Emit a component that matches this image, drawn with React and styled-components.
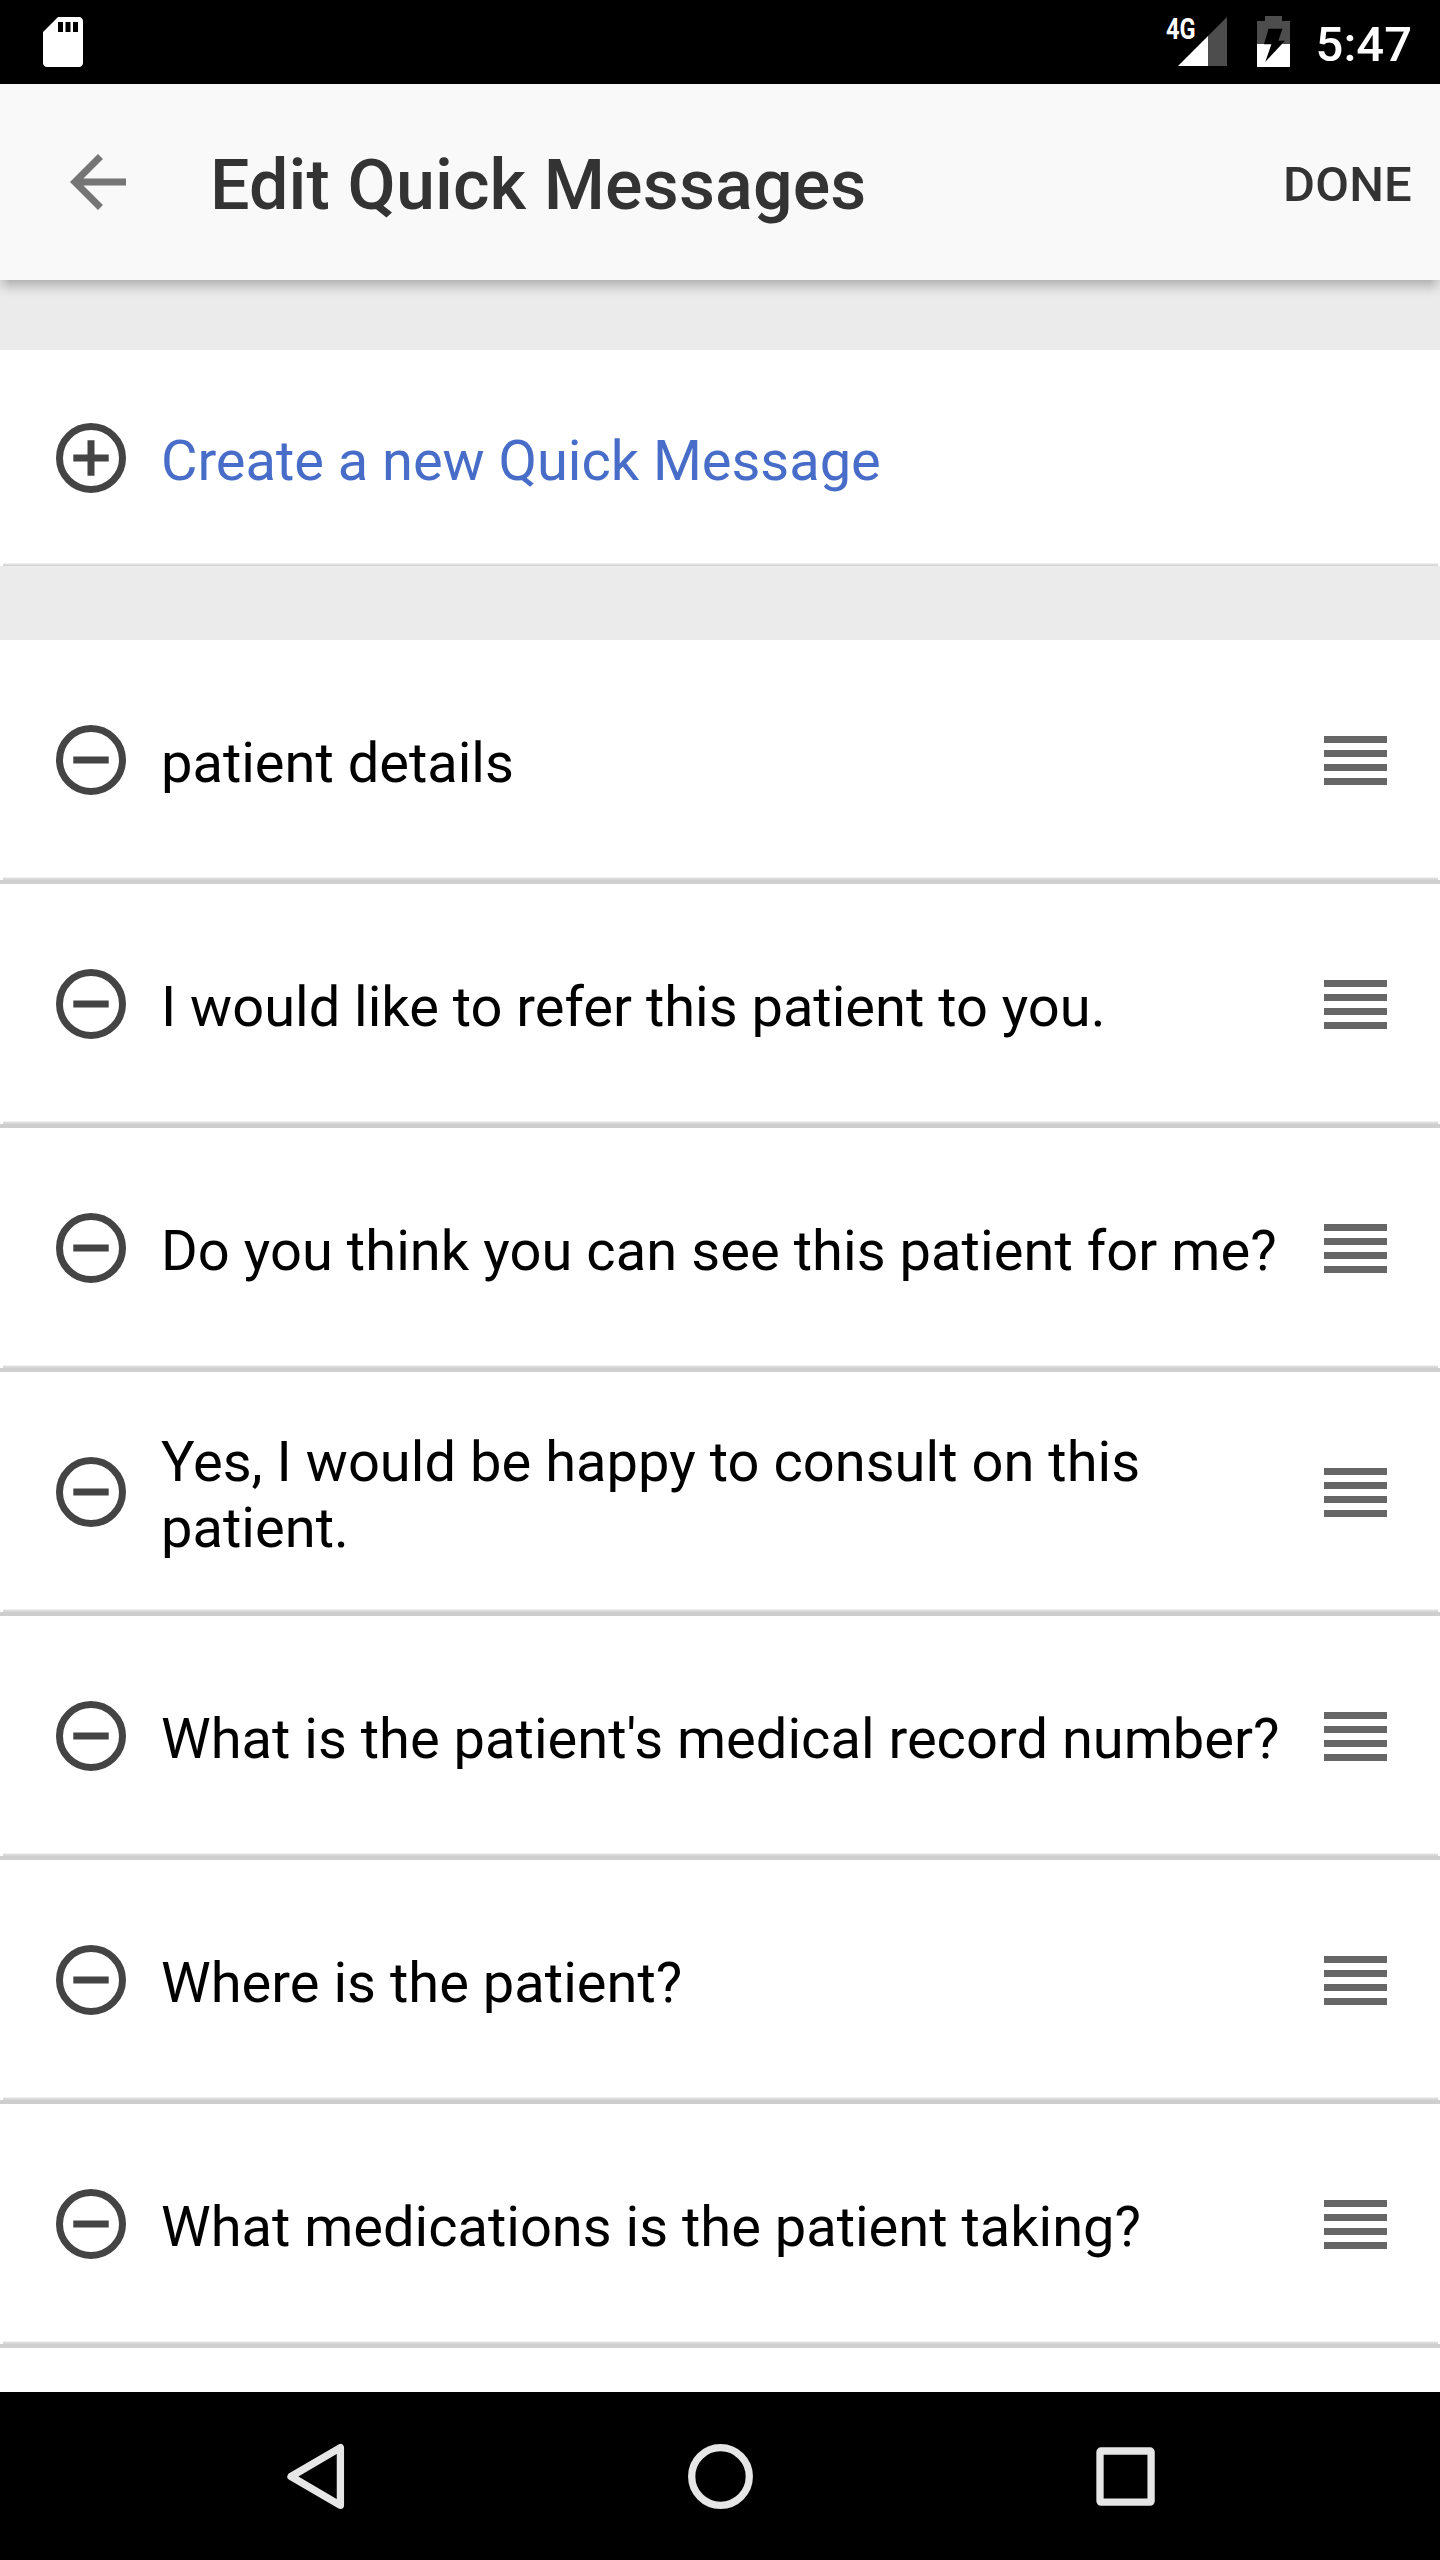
import React from "react";
import styled, { createGlobalStyle } from "styled-components";

const GlobalStyle = createGlobalStyle`
  * { box-sizing: border-box; }
  body { margin: 0; background: #ebebeb; font-family: Roboto, "Noto Sans", sans-serif; }
`;

const Screen = styled.div`
  width: 1440px;
  height: 2560px;
  display: flex;
  flex-direction: column;
  overflow: hidden;
  background: #ebebeb;
`;

const StatusBar = styled.header`
  flex: none;
  height: 84px;
  padding: 0 28px 0 33px;
  display: flex;
  justify-content: space-between;
  background: #000;
  color: #fff;
`;

const StatusGroup = styled.div`
  display: flex;
  align-items: flex-start;
`;

const SdIcon = styled.svg`
  width: 60px;
  height: 60px;
  margin-top: 12px;
`;

const NetworkLabel = styled.span`
  width: 30px;
  height: 30px;
  margin: 14px -18px 0 0;
  font-size: 29.5px;
  line-height: 30px;
  font-weight: 700;
  white-space: nowrap;
  transform: scaleX(0.8);
  transform-origin: 0 0;
`;

const SignalIcon = styled.svg`
  width: 49px;
  height: 49px;
  margin: 17px 30px 0 0;
`;

const BatteryIcon = styled.svg`
  width: 33px;
  height: 51px;
  margin: 16px 26px 0 0;
`;

const Clock = styled.time`
  margin-top: 16px;
  font-size: 49px;
  line-height: 58px;
  font-weight: 500;
`;

const Toolbar = styled.div`
  flex: none;
  height: 196px;
  padding: 0 28px 0 56px;
  display: flex;
  align-items: center;
  background: #f9f9f9;
  color: #333;
`;

const BackIcon = styled.svg`
  width: 84px;
  height: 84px;
  fill: #757575;
`;

const Title = styled.h1`
  flex: 1;
  margin: 6px 0 0 70px;
  font-size: 70px;
  line-height: 82px;
  font-weight: 500;
  letter-spacing: 0.13px;
`;

const Done = styled.span`
  margin-top: 5px;
  font-size: 49px;
  line-height: 58px;
  font-weight: 500;
  letter-spacing: 0.2px;
`;

const ToolbarShadow = styled.div`
  flex: none;
  height: 18px;
  background:
    linear-gradient(
      90deg,
      rgba(235, 235, 235, 0.6),
      rgba(235, 235, 235, 0) 10px,
      rgba(235, 235, 235, 0) calc(100% - 10px),
      rgba(235, 235, 235, 0.6)
    ),
    linear-gradient(#b5b5b5, #c9c9c9 28%, #dcdcdc 56%, #e8e8e8 83%, #ebebeb);
`;

const Gap = styled.div`
  flex: none;
  height: ${(p) => p.$size}px;
`;

const Row = styled.div`
  flex: none;
  height: ${(p) => p.$height}px;
  padding: 3px 53px 0 56px;
  display: grid;
  grid-template-columns: 70px 1fr 63px;
  grid-template-rows: 1fr 3px;
  align-items: center;
  background: #fff;
`;

const RowIcon = styled.svg`
  width: 70px;
  height: 70px;
  fill: none;
  stroke: #444;
  stroke-width: 7;
`;

const RowText = styled.span`
  margin: 6px 20px 0 35px;
  font-size: 56px;
  line-height: 66px;
  letter-spacing: ${(p) => p.$tracking || 0}px;
  color: ${(p) => p.$color};
`;

const Handle = styled.span`
  display: grid;
  gap: 7px;
  margin-top: 1px;
`;

const HandleBar = styled.i`
  height: 7px;
  background: #666;
`;

const RowShadow = styled.div`
  grid-column: 1 / -1;
  height: 3px;
  margin: 0 -51px 0 -53px;
  background: linear-gradient(#f0f0f0 1px, #dfdfdf 1px 2px, #d5d5d5 2px);
`;

const Divider = styled.div`
  flex: none;
  height: 4px;
  background: #cecece;
`;

const Filler = styled.div`
  flex: 1;
  background: #fff;
`;

const NavBar = styled.nav`
  flex: none;
  height: 168px;
  display: flex;
  justify-content: center;
  align-items: center;
  gap: 321px;
  background: #000;
`;

const NavIcon = styled.svg`
  width: 84px;
  height: 84px;
  fill: none;
  stroke: #e6e6e6;
  stroke-width: 7.3;
  stroke-linejoin: round;
`;

const messages = [
  { text: "patient details" },
  { text: "I would like to refer this patient to you." },
  { text: "Do you think you can see this patient for me?", tracking: 0.07 },
  { text: "Yes, I would be happy to consult on this patient.", tracking: 0.04 },
  { text: "What is the patient's medical record number?", tracking: 0.02 },
  { text: "Where is the patient?", tracking: 0.03 },
  { text: "What medications is the patient taking?" },
];

function CircleIcon({ plus }) {
  return (
    <RowIcon viewBox="0 0 70 70">
      <circle cx="35" cy="35" r="31.5" />
      <path d={plus ? "M17.3 35h35.4M35 17.3v35.4" : "M17.3 35h35.4"} />
    </RowIcon>
  );
}

function MessageRow({ text, tracking }) {
  return (
    <>
      <Row $height={240}>
        <CircleIcon />
        <RowText $color="#000" $tracking={tracking}>
          {text}
        </RowText>
        <Handle>
          <HandleBar />
          <HandleBar />
          <HandleBar />
          <HandleBar />
        </Handle>
        <RowShadow />
      </Row>
      <Divider />
    </>
  );
}

export default function App() {
  return (
    <Screen>
      <GlobalStyle />
      <StatusBar>
        <SdIcon viewBox="0 0 24 24">
          <path
            fill="#fff"
            fillRule="evenodd"
            d="M18.4 2H10L4 8v12.4C4 21.3 4.7 22 5.6 22h12.8c.9 0 1.6-.7 1.6-1.6V3.6C20 2.7 19.3 2 18.4 2zM12 8h-2V4h2zm3 0h-2V4h2zm3 0h-2V4h2z"
          />
        </SdIcon>
        <StatusGroup>
          <NetworkLabel>4G</NetworkLabel>
          <SignalIcon viewBox="0 0 49 49">
            <path fill="#4d4d4d" d="M49 0v49H30V19z" />
            <path fill="#fff" d="M30 19v30H0z" />
          </SignalIcon>
          <BatteryIcon viewBox="0 0 33 51">
            <path fill="#4d4d4d" d="M8 0h17v5h8v23H0V5h8z" />
            <path fill="#fff" d="M0 28h33v23H0z" />
            <path fill="#000" d="M11.5 12.8h14L21.3 24.8H28L8.3 45.8 14.4 28.3H7z" />
          </BatteryIcon>
          <Clock>5:47</Clock>
        </StatusGroup>
      </StatusBar>
      <Toolbar>
        <BackIcon viewBox="0 0 24 24">
          <path d="M20 11H7.83l5.59-5.59L12 4l-8 8 8 8 1.41-1.41L7.83 13H20v-2z" />
        </BackIcon>
        <Title>Edit Quick Messages</Title>
        <Done>DONE</Done>
      </Toolbar>
      <ToolbarShadow />
      <Gap $size={52} />
      <Row $height={216}>
        <CircleIcon plus />
        <RowText $color="#476dc8" $tracking={-0.03}>
          Create a new Quick Message
        </RowText>
        <span />
        <RowShadow />
      </Row>
      <Gap $size={74} />
      {messages.map((m) => (
        <MessageRow key={m.text} text={m.text} tracking={m.tracking} />
      ))}
      <Filler />
      <NavBar>
        <NavIcon viewBox="0 0 84 84">
          <path d="M67.4 13.7v57.6L18 42.5z" />
        </NavIcon>
        <NavIcon viewBox="0 0 84 84">
          <circle cx="42.5" cy="42.5" r="28.8" />
        </NavIcon>
        <NavIcon viewBox="0 0 84 84">
          <rect x="17" y="17" width="51.1" height="51.1" rx="1" />
        </NavIcon>
      </NavBar>
    </Screen>
  );
}
